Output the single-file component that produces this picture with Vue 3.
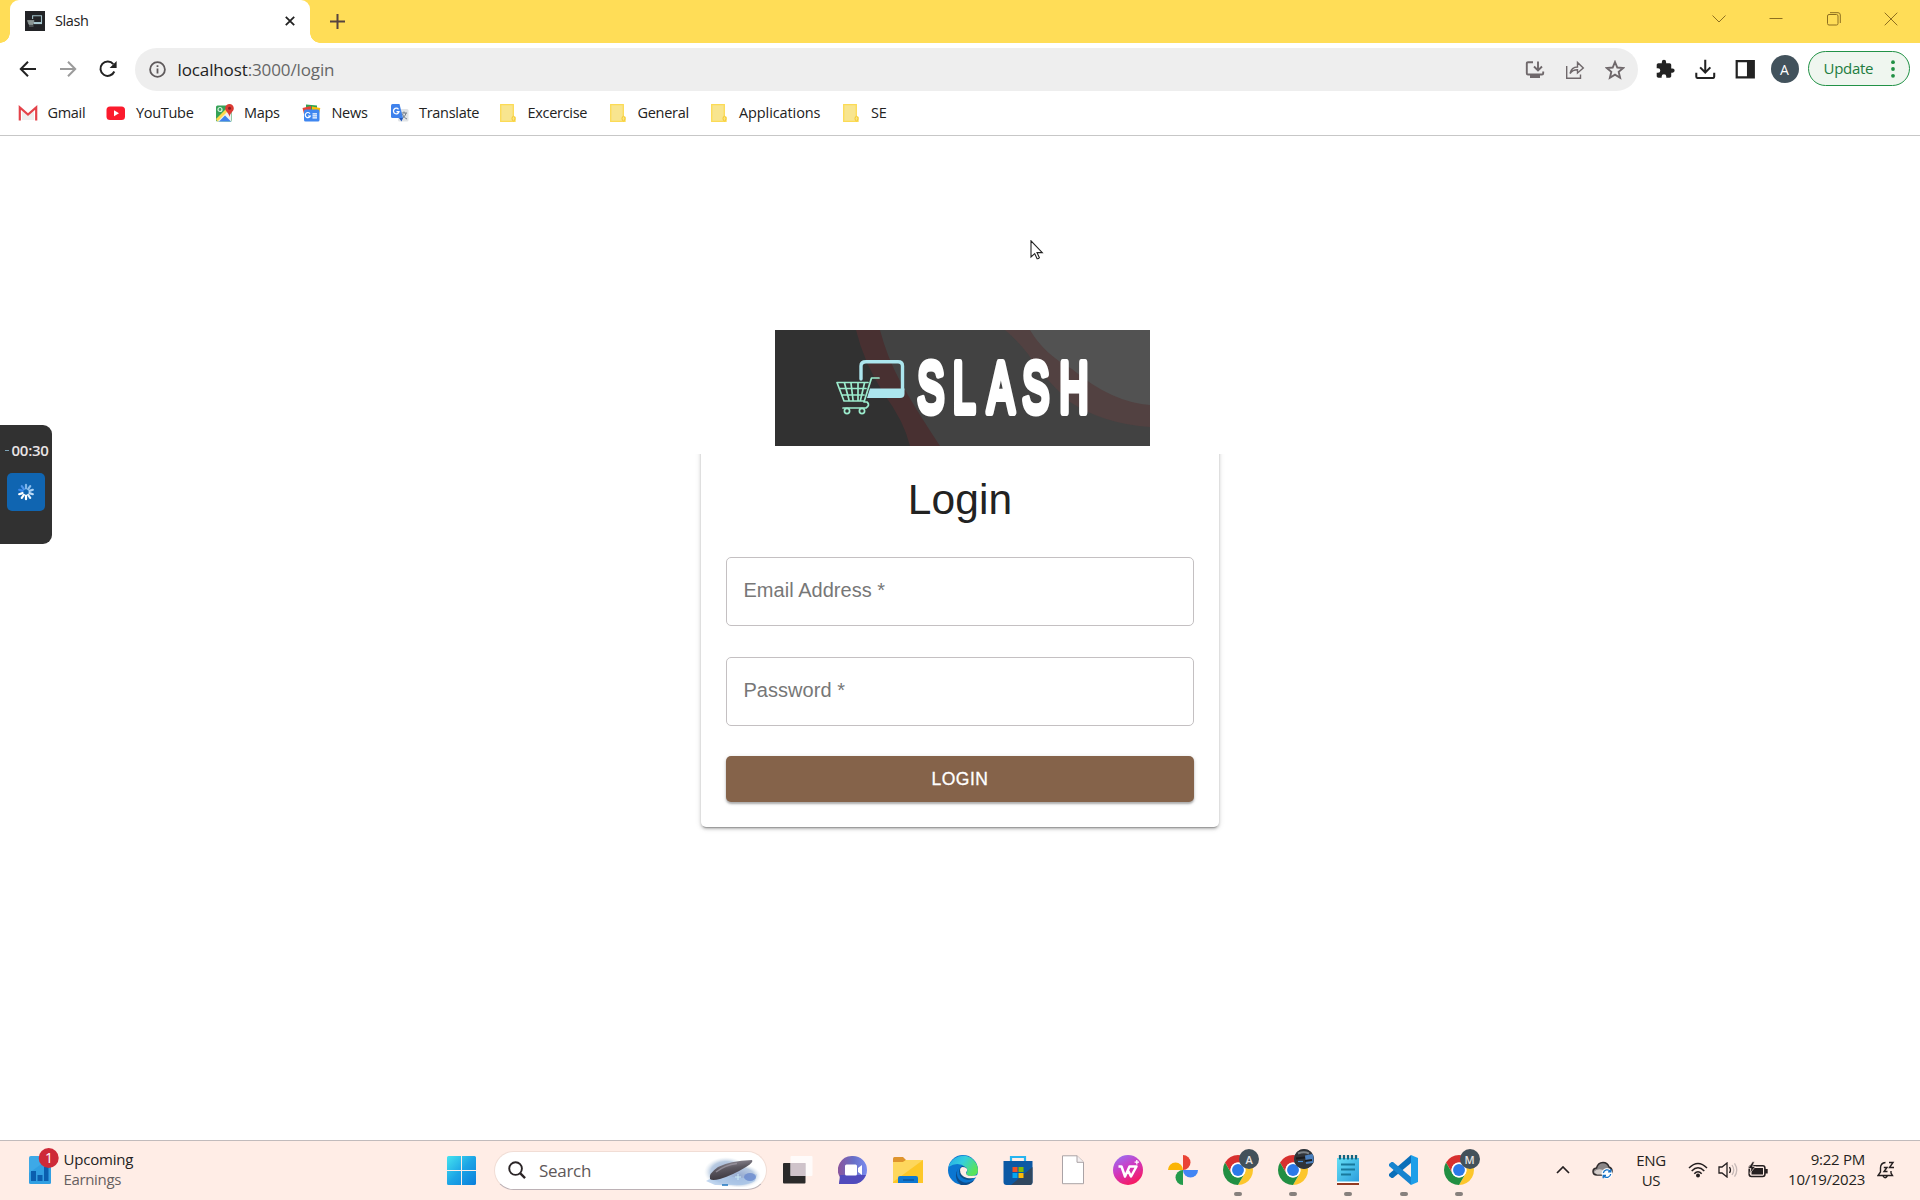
<script setup>
const bookmarks = [
  { label: 'Gmail', icon: 'gmail', width: 88, pad: 29.5 },
  { label: 'YouTube', icon: 'youtube', width: 109, pad: 30 },
  { label: 'Maps', icon: 'maps', width: 87, pad: 29 },
  { label: 'News', icon: 'news', width: 88, pad: 29.5 },
  { label: 'Translate', icon: 'translate', width: 110, pad: 29 },
  { label: 'Excercise', icon: 'folder', width: 110, pad: 27.5 },
  { label: 'General', icon: 'folder', width: 101, pad: 27.5 },
  { label: 'Applications', icon: 'folder', width: 132, pad: 28, spacing: -0.1 },
  { label: 'SE', icon: 'folder', width: 60, pad: 28 }
]
const apps = [
  { icon: 'taskview' },
  { icon: 'chat' },
  { icon: 'explorer' },
  { icon: 'edge' },
  { icon: 'store' },
  { icon: 'file' },
  { icon: 'wps' },
  { icon: 'photos' },
  { icon: 'chrome', badge: 'A', open: true },
  { icon: 'chrome', badge: 'photo', open: true },
  { icon: 'notepad', open: true },
  { icon: 'code', open: true },
  { icon: 'chrome', badge: 'M', open: true }
]
const rays = [0, 1, 2, 3, 4, 5, 6, 7, 8, 9]
const rayColors = ['#7fb6ea', '#8fc0ee', '#a9d0f4', '#bfdcf7', '#e6f2fc', '#ffffff', '#ffffff', '#ffffff', '#3d8bef', '#4f97ee']
</script>

<template>
  <div class="screen">
    <div class="titlebar">
      <div class="tab">
        <svg class="favicon" viewBox="0 0 20 20">
          <rect width="20" height="20" fill="#222326" />
          <path d="M7.600 8V4.800H16.500V11.500H8" fill="none" stroke="#9fbfc6" stroke-width="1.100" />
          <path d="M8.500 12.300H17" stroke="#a9c9d0" stroke-width="1.600" />
          <path d="M2.500 9.500H9L8 13.500H4ZM4 15H8.500" fill="#8b9694" stroke="#8b9694" stroke-width=".8" />
        </svg>
        <span class="tab-title">Slash</span>
        <svg class="tab-close" viewBox="0 0 10 10"><path d="M.8.8 9.200 9.200M9.200.8.8 9.200" stroke="#222" stroke-width="1.800" /></svg>
      </div>
      <svg class="new-tab" viewBox="0 0 15 15"><path d="M7.500 0V15M0 7.500H15" stroke="#57443f" stroke-width="2" /></svg>
      <div class="window-controls">
        <svg viewBox="0 0 14 14"><path d="M.5 3.500 7 10 13.500 3.500" /></svg>
        <svg viewBox="0 0 14 14"><path d="M.5 6.500H13.500" /></svg>
        <svg viewBox="0 0 14 14"><rect x=".5" y="2.500" width="10.500" height="10.500" rx="1.500" /><path d="M3 .7H11Q13.300.7 13.300 3V11" /></svg>
        <svg viewBox="0 0 14 14"><path d="M.7.7 13.300 13.300M13.300.7.7 13.300" /></svg>
      </div>
    </div>

    <div class="toolbar">
      <div class="nav">
        <svg viewBox="0 0 20 20" stroke="#222"><path d="M18 10H3M10 2.800 2.800 10 10 17.200" /></svg>
        <svg viewBox="0 0 20 20" stroke="#9b9b9b"><path d="M2 10H17M10 2.800 17.200 10 10 17.200" /></svg>
        <svg viewBox="0 0 20 20" stroke="#222"><path d="M16.300 12.500A7.200 7.200 0 1 1 15.300 5.200" /><path d="M18.600 2V9H11.600Z" fill="#222" stroke="none" /></svg>
      </div>
      <div class="omnibox">
        <svg class="info" viewBox="0 0 17 17"><circle cx="8.500" cy="8.500" r="7.400" fill="none" stroke="#5f5a5c" stroke-width="1.800" /><path d="M8.500 7.500V12.600M8.500 4.200V6" stroke="#5f5a5c" stroke-width="1.800" /></svg>
        <span class="url"><span class="host">localhost</span>:3000/login</span>
        <div class="omni-actions">
          <svg viewBox="0 0 20 20"><path d="M8 2.200H3Q1.800 2.200 1.800 3.400V13.200Q1.800 14.500 3 14.500H17Q18.200 14.500 18.200 13.200V11.500M13 1.500V9.500M9 6.500 13 10.500 17 6.500" /><path d="M5 15H15V18H5Z" fill="#6f686b" stroke="none" /></svg>
          <svg viewBox="0 0 20 20"><path d="M1.700 6V18.200H15.500V14.500M5 13.500C6 9 8.500 7 12.500 7V2.500L18.300 8 12.500 13V9.700C9 9.700 7 10.500 5 13.500Z" stroke-width="1.400" /></svg>
          <svg viewBox="0 0 20 20"><path d="M10 2 12.300 7.500 18.200 8 13.700 11.900 15.100 17.700 10 14.600 4.900 17.700 6.300 11.900 1.800 8 7.700 7.500Z" stroke-width="1.900" /></svg>
        </div>
      </div>
      <div class="extensions">
        <svg viewBox="0 0 24 24"><path d="M20.500 11H19V7c0-1.100-.9-2-2-2h-4V3.500a2.500 2.500 0 0 0-5 0V5H4c-1.100 0-2 .9-2 2v3.800h1.500a2.700 2.700 0 0 1 0 5.400H2V20c0 1.100.9 2 2 2h3.800v-1.500a2.700 2.700 0 0 1 5.400 0V22H17c1.100 0 2-.9 2-2v-4h1.500a2.500 2.500 0 0 0 0-5z" fill="#222" /></svg>
        <svg viewBox="0 0 24 24"><path d="M12 1V15.500M6 9.800 12 15.800 18 9.800M1.500 16V20.500Q1.500 22.300 3.500 22.300H20.500Q22.500 22.300 22.500 20.500V16" fill="none" stroke="#222" stroke-width="2.400" /></svg>
        <svg viewBox="0 0 24 24"><path d="M2 2.500H22V21.500H2Z" fill="#fff" stroke="#222" stroke-width="2.600" /><path d="M14 2H22V22H14Z" fill="#222" /></svg>
      </div>
      <div class="avatar">A</div>
      <div class="update"><span>Update</span><svg viewBox="0 0 4 18"><circle cx="2" cy="2.200" r="1.900" /><circle cx="2" cy="9" r="1.900" /><circle cx="2" cy="15.800" r="1.900" /></svg></div>
    </div>

    <div class="bookmarks">
      <div v-for="b in bookmarks" :key="b.label" class="bookmark" :style="{ width: b.width + 'px' }">
        <div class="bm-icon" :style="{ width: b.pad + 'px' }">
          <svg v-if="b.icon === 'gmail'" viewBox="0 0 20 20"><path d="M4 8V17H16V8L10 13Z" fill="#eee" /><path d="M1.800 17.500V4.500L10 11.500 18.200 4.500V17.500" fill="none" stroke="#e4434a" stroke-width="2.200" /></svg>
          <svg v-else-if="b.icon === 'youtube'" viewBox="0 0 20 20"><rect x=".5" y="3.500" width="18.500" height="13.500" rx="3.500" fill="#fb1b2d" /><path d="M8 7.300V13.200L13 10.200Z" fill="#fff" /></svg>
          <svg v-else-if="b.icon === 'maps'" viewBox="0 0 20 20"><rect x="1" y="2.500" width="16" height="16" rx="1.500" fill="#36a257" /><path d="M1.500 18.500 16.500 3.500V18Z" fill="#eef1f2" /><path d="M1 16 14 3 16 5 2.500 18.500Z" fill="#ffd94f" /><path d="M4 18.500 10 12.500 16 18.500Z" fill="#3f83ec" /><circle cx="5" cy="6.500" r="2" fill="none" stroke="#d8efe0" stroke-width="1.200" /><path d="M14.500 14C14 10 10.200 8.500 10.200 5.300A4.300 4.300 0 0 1 18.800 5.300C18.800 8.500 15 10 14.500 14Z" fill="#dc3a33" /><circle cx="14.500" cy="5.300" r="1.500" fill="#831f24" /></svg>
          <svg v-else-if="b.icon === 'news'" viewBox="0 0 20 20"><path d="M4 1.500 15 2.500V9H4Z" fill="#31a153" /><path d="M.5 5 9 3V12L2.500 13Z" fill="#e94335" /><path d="M18.300 5 10 3.500V12L16.500 13Z" fill="#fbbc04" /><rect x="2" y="6.500" width="15.500" height="12" rx="1.500" fill="#3f86f0" /><path d="M8 10.600A2.600 2.600 0 1 0 8.300 13H6M10.500 10.800H15M10.500 12.800H15M10.500 14.800H15" fill="none" stroke="#fff" stroke-width="1.200" /></svg>
          <svg v-else-if="b.icon === 'translate'" viewBox="0 0 20 20"><rect x="8" y="6" width="10.500" height="12.500" rx="1.500" fill="#e0e3e6" /><path d="M11.500 10H17M14 8.500V10M16 10C15.500 13 13 15 11.500 15.500M12.500 11C13.500 14 15 15 17 16" fill="none" stroke="#717b86" /><path d="M2.500 1H9.500L13 15H2.500Q1 15 1 13.500V2.500Q1 1 2.500 1Z" fill="#3f82ec" /><path d="M9 15H13L11.500 18.500Z" fill="#2156b9" /><path d="M8.500 6.300A2.800 2.800 0 1 0 9 8.700H6.500" fill="none" stroke="#fff" stroke-width="1.300" /></svg>
          <svg v-else viewBox="0 0 20 20"><path d="M.7 1.700H13.300V14.500H15V18.300H.7Z" fill="#f8e58f" stroke="#fcdb55" stroke-width="1.300" /><ellipse cx="13.500" cy="15.600" rx="1.500" ry="2.300" fill="#fbe47b" stroke="#f5c931" /></svg>
        </div>
        <span :style="b.spacing ? { letterSpacing: b.spacing + 'px' } : null">{{ b.label }}</span>
      </div>
    </div>

    <main class="page">
      <div class="banner-row">
        <svg class="banner" viewBox="0 0 375 116">
          <rect width="375" height="116" fill="#424242" />
          <path d="M0 0H82Q90 33 110 64Q130 91 136 116H0Z" fill="#313131" />
          <path d="M81 0H105Q112 27 125 51T165 116H135Q129 91 109 64Q89 33 81 0Z" fill="#483031" />
          <path d="M254 0H375V76Q336 73 296 40Q268 25 254 0Z" fill="#525252" />
          <path d="M230 0H255Q269 24 297 39Q336 72 375 75V97Q329 94 295 72Q266 45 253 24Q242 10 230 0Z" fill="#524141" />
          <g fill="none" stroke="#ace6ee" stroke-linecap="round">
            <path d="M86 49V36Q86 31.800 91 31.800H123Q127.500 31.800 127.500 36V60" stroke-width="3.400" />
            <path d="M95 58.500H129.500V64Q129.500 68 125 68H92Z" fill="#ace6ee" stroke="none" />
          </g>
          <g fill="none" stroke="#9ceccd" stroke-width="1.700" stroke-linecap="round" stroke-linejoin="round">
            <path d="M104 48H96.500L89 72H92Q95.500 75 91 78H68M93 52.500H62L69 71H89M64.500 58.500H91M67 65H89M69.500 53 74 70M76 53 78 70M83 53V70M89.500 53 85.500 70" />
            <circle cx="72" cy="81" r="2.600" /><circle cx="87" cy="81" r="2.600" />
          </g>
          <text class="logo-text" transform="translate(0 81.500) scale(1 1.780)" x="142.500 178 212.500 247.500 284.500" y="0">SLASH</text>
        </svg>
      </div>
      <div class="card">
        <h1>Login</h1>
        <div class="field">Email Address *</div>
        <div class="field">Password *</div>
        <button class="submit">LOGIN</button>
      </div>
    </main>

    <svg class="pointer" viewBox="0 0 14 22"><path d="M1 .8V17L4.700 13.600 7.100 18.700Q8.500 19 9.400 17.700L7 12.600H12.300Z" fill="#fff" stroke="#222" stroke-width="1.100" /></svg>

    <div class="recorder">
      <div class="timer"><i></i>00:30</div>
      <div class="rec-button">
        <svg viewBox="-9 -9 18 18"><path v-for="r in rays" :key="r" d="M0-3.600V-7.200" :transform="'rotate(' + r * 36 + ')'" :stroke="rayColors[r]" stroke-width="2.200" stroke-linecap="round" /></svg>
      </div>
    </div>

    <div class="taskbar">
      <div class="widget">
        <svg viewBox="0 0 34 36">
          <rect x="4" y="8" width="22" height="28" rx="1.800" fill="#3da9e7" /><path d="M4 25 26 9V34.500Q26 36 24.500 36H5.500Q4 36 4 34.500Z" fill="#2b99df" opacity=".65" />
          <path d="M6 23H11V33H6ZM12.500 27H17.500V33H12.500ZM19 19H23.500V33H19Z" fill="#0b5eae" />
          <circle cx="23.700" cy="10" r="10" fill="#ce2a38" />
          <text x="23.900" y="15" text-anchor="middle" class="count">1</text>
        </svg>
        <div class="widget-text"><span>Upcoming</span><span class="muted">Earnings</span></div>
      </div>
      <svg class="start" viewBox="0 0 29 29">
        <defs><linearGradient id="win" x2="1" y2="1"><stop offset="0" stop-color="#45e4ef" /><stop offset=".5" stop-color="#1da5e6" /><stop offset="1" stop-color="#0a7edb" /></linearGradient></defs>
        <path d="M1.500 0H14V14H0V1.500Q0 0 1.500 0ZM15 0H27.500Q29 0 29 1.500V14H15ZM0 15H14V29H1.500Q0 29 0 27.500ZM15 15H29V27.500Q29 29 27.500 29H15Z" fill="url(#win)" />
      </svg>
      <div class="search">
        <svg class="glass" viewBox="0 0 19 19"><circle cx="8" cy="8" r="6.700" fill="none" stroke="#2a2426" stroke-width="2" /><path d="M12.800 12.800 18 18" stroke="#2a2426" stroke-width="2.500" /></svg>
        <span>Search</span>
        <svg class="daily" viewBox="0 0 58 30">
          <defs>
            <radialGradient id="haze"><stop offset="0" stop-color="#93a8cf" /><stop offset=".7" stop-color="#b9cbe2" /><stop offset="1" stop-color="#e3ebf1" stop-opacity="0" /></radialGradient>
            <linearGradient id="rock" x1="0" x2=".3" y2="1"><stop offset="0" stop-color="#a19ca7" /><stop offset=".5" stop-color="#5d5962" /><stop offset="1" stop-color="#3b373f" /></linearGradient>
          </defs>
          <ellipse cx="23" cy="15" rx="22" ry="15" fill="url(#haze)" /><ellipse cx="36" cy="19" rx="22" ry="12" fill="url(#haze)" />
          <path d="M3 24Q15 17 30 20T54 17L52 24Q45 29 28 28H12Z" fill="#a6c4e8" opacity=".7" />
          <ellipse cx="47" cy="20" rx="6" ry="4" fill="#6685cc" opacity=".75" />
          <path d="M7 22Q5 17 15 10Q26 4 49 3Q51 5 43 10Q30 18 17 22Q9 24 7 22Z" fill="url(#rock)" />
          <path d="M13 15Q22 8 34 6.500" fill="none" stroke="#a39da8" stroke-width="1.500" opacity=".7" />
          <path d="M35 17V23M32 20H38" stroke="#d9fcff" opacity=".8" /><path d="M19 28H25" stroke="#2176bf" stroke-width="1.500" />
        </svg>
      </div>
      <div class="apps">
        <div v-for="(a, n) in apps" :key="n" class="app">
          <svg v-if="a.icon === 'taskview'" viewBox="0 0 30 30"><rect y="8" width="22.500" height="20.500" rx="1" fill="#2b2a2a" /><rect x="7.500" y="1" width="22" height="20" rx="1" fill="#fff" opacity=".78" /><path d="M7.500 8H22.500V21H7.500Z" fill="#cfc3ca" /></svg>
          <svg v-else-if="a.icon === 'chat'" viewBox="0 0 30 30"><defs><linearGradient id="chat" x1="0" x2="1"><stop offset="0" stop-color="#8a549d" /><stop offset=".55" stop-color="#6770c8" /><stop offset="1" stop-color="#7b8cf0" /></linearGradient></defs><path d="M15 1A14 14 0 1 1 15 29H1L2.500 23A14 14 0 0 1 15 1Z" fill="url(#chat)" /><path d="M2 20 28 20Q24 29 15 29H1Z" fill="#514bbc" /><rect x="7" y="9.500" width="12" height="11" rx="1.500" fill="#fff" /><path d="M20 13 24 10V20L20 17Z" fill="#fff" /></svg>
          <svg v-else-if="a.icon === 'explorer'" viewBox="0 0 30 30"><path d="M0 3.500Q0 2 1.500 2H10L13 5V12H0Z" fill="#df942d" /><path d="M0 7H10L13 5H30V28H0Z" fill="#fdc728" /><path d="M0 7H10L13 5H30L0 27Z" fill="#fed75d" /><path d="M5 28V23Q5 21 7 21H23Q25 21 25 23V28Z" fill="#0e78d2" /><path d="M10 25H21" stroke="#0c569d" stroke-width="1.500" /></svg>
          <svg v-else-if="a.icon === 'edge'" viewBox="0 0 30 30"><defs><linearGradient id="edge" x2="1" y2=".5"><stop offset="0" stop-color="#23a6e8" /><stop offset=".5" stop-color="#36cfdd" /><stop offset="1" stop-color="#58e35b" /></linearGradient></defs><circle cx="15" cy="15" r="15" fill="#0b76d1" /><path d="M.5 12A15 15 0 0 1 30 15Q30 21 23 21Q18 21 18 18.500Q20.500 16 18 12.500Q10 6 .5 12Z" fill="url(#edge)" /><path d="M11 12Q6 21 13 26Q18 30 26.500 25A15 15 0 0 1 13 30Q4 23 11 12Z" fill="#0d4c8b" /><path d="M14 11Q20 12 19 16Q17 18 19 20Q22 22 28 21Q25 25 20 25Q11 24 11 16Q11 13 14 11Z" fill="#0d5088" /><path d="M14 12Q20 12 19 16Q17 18 19 20Q22 22 30 20L29 22Q25 24 19 23Q12 21 12 15Q12 13 14 12Z" fill="#ffede6" /></svg>
          <svg v-else-if="a.icon === 'store'" viewBox="0 0 30 30"><path d="M8 7V2H22V7" fill="none" stroke="#27b5f0" stroke-width="2.200" /><path d="M.5 6H29.500V27Q29.500 30 26.500 30H3.500Q.5 30 .5 27Z" fill="#0c59a4" /><path d="M29.500 12V27Q29.500 30 26.500 30H8Z" fill="#30475f" /><path d="M9.500 12H14.500V17H9.500Z" fill="#f35325" /><path d="M15.500 12H20.500V17H15.500Z" fill="#81bc06" /><path d="M9.500 18H14.500V23H9.500Z" fill="#05a6f0" /><path d="M15.500 18H20.500V23H15.500Z" fill="#ffba08" /></svg>
          <svg v-else-if="a.icon === 'file'" viewBox="0 0 30 30"><path d="M4.500.8H19L25.500 7V28.700H4.500Z" fill="#fff" stroke="#aaa3a6" /><path d="M19 .8V7.300H25.500" fill="#f4eff0" stroke="#aaa3a6" /></svg>
          <svg v-else-if="a.icon === 'wps'" viewBox="0 0 30 30"><defs><linearGradient id="wps" x1=".2" x2=".7" y2="1"><stop offset="0" stop-color="#9a70f1" /><stop offset=".45" stop-color="#cf38c1" /><stop offset="1" stop-color="#fb1657" /></linearGradient></defs><circle cx="15" cy="15" r="15" fill="url(#wps)" /><path d="M5.500 11.500H8.500L12 21.500 16.500 11.500H23.500L18 21.500 14.800 15" fill="none" stroke="#fff" stroke-width="2.500" stroke-linejoin="round" /><path d="M23.800 5V9.400M21.600 7.200H26" stroke="#fff" stroke-width="1.300" /></svg>
          <svg v-else-if="a.icon === 'photos'" viewBox="0 0 30 30"><path d="M15 0A7.500 7.500 0 0 1 15 15Z" fill="#ea4335" /><path d="M30 15A7.500 7.500 0 0 1 15 15Z" fill="#4285f4" /><path d="M15 30A7.500 7.500 0 0 1 15 15Z" fill="#249b4b" /><path d="M0 15A7.500 7.500 0 0 1 15 15Z" fill="#fbb506" /></svg>
          <svg v-else-if="a.icon === 'chrome'" viewBox="2 2 44 44"><path d="M24 13H43.050A22 22 0 0 0 4.950 13L14.470 29.500A11 11 0 0 1 24 13Z" fill="#d8302f" /><path d="M43.050 13H24A11 11 0 0 1 33.530 29.500L24 46A22 22 0 0 0 43.050 13Z" fill="#fcc62c" /><path d="M4.950 13 14.470 29.500A11 11 0 0 0 33.530 29.500L24 46A22 22 0 0 1 4.950 13Z" fill="#218f42" /><circle cx="24" cy="24" r="11" fill="#fff" /><circle cx="24" cy="24" r="8.700" fill="#2b79e8" /></svg>
          <svg v-else-if="a.icon === 'notepad'" viewBox="0 0 30 30"><defs><linearGradient id="note" x2="1" y2="1"><stop offset="0" stop-color="#65dff4" /><stop offset="1" stop-color="#2b9ddd" /></linearGradient></defs><path d="M4 3H26V27H4Z" fill="url(#note)" /><path d="M4 26.500H26V28H4Z" fill="#fff" /><path d="M4 28H26V30H4Z" fill="#933a21" /><path d="M7 .5V3.500M11 .5V3.500M15 .5V3.500M19 .5V3.500M23 .5V3.500" stroke="#14647f" stroke-width="2.300" stroke-linecap="round" /><path d="M8 9.500H22M8 14.500H22M8 19.500H18" stroke="#18799c" stroke-width="1.800" /></svg>
          <svg v-else viewBox="0 0 30 30"><path d="M22 0 0 19V21L2.500 23H4L22 8Z" fill="#0b6fb9" /><path d="M22 30 0 11V9L2.500 7H4L22 22Z" fill="#1784cf" /><path d="M22 0 29 3V27L22 30Z" fill="#1e9fe9" /></svg>
          <div v-if="a.badge === 'photo'" class="badge"><svg viewBox="0 0 20 20"><circle cx="10" cy="10" r="10" fill="#303439" /><path d="M4 4.500Q10 2 15 4.500" fill="none" stroke="#7b8288" stroke-width="2" /><path d="M11 6.500 18.500 5Q20.500 9 19 14L12 15Z" fill="#4a7fbe" /><path d="M2 9.500 11 8.500M11 12 18 11" stroke="#1b1c1f" stroke-width="2" /><path d="M4 12.500H9" stroke="#4a90d8" stroke-width="1.200" /></svg></div>
          <div v-else-if="a.badge" class="badge">{{ a.badge }}</div>
          <i v-if="a.open" class="running"></i>
        </div>
      </div>
      <div class="tray">
        <svg class="t-up" viewBox="0 0 14 8"><path d="M1 7 7 1 13 7" fill="none" stroke="#251f20" stroke-width="1.700" /></svg>
        <svg class="t-cloud" viewBox="0 0 21 18"><path d="M5 14Q1 14 1 10.500Q1 7.500 4.500 7Q6 1.500 11 1.500Q15.500 1.500 17 6Q20 7 20 10Q20 14 16 14Z" fill="#8b8687" stroke="#302b2c" stroke-width="1.500" /><path d="M2 11Q5 7 11 9L19 8Q20 14 16 13.500H5Z" fill="#d4cdca" /><circle cx="15" cy="12.500" r="5.400" fill="#fff" /><path d="M11.300 12A4 4 0 0 1 18.300 10.300M18.700 13A4 4 0 0 1 11.700 15M18.800 8V10.800H16M11.200 17.200V14.500H14" fill="none" stroke="#1672c7" stroke-width="1.300" /></svg>
        <div class="lang"><span>ENG</span><span>US</span></div>
        <svg class="t-wifi" viewBox="0 0 20 16"><path d="M1 6Q10-3 19 6M3.700 9Q10 2.500 16.300 9M6.300 11.800Q10 7.800 13.700 11.800" fill="none" stroke="#251f20" stroke-width="1.500" /><circle cx="10" cy="13.500" r="2" fill="#251f20" /></svg>
        <svg class="t-sound" viewBox="0 0 20 16"><path d="M1 5H4L9 1V15L4 11H1Z" fill="none" stroke="#251f20" stroke-width="1.300" /><path d="M11.500 5Q13.500 8 11.500 11" fill="none" stroke="#251f20" stroke-width="1.300" /><path d="M14 3Q17.500 8 14 13M16.500 1.300Q21 8 16.500 14.700" fill="none" stroke="#c6b9b7" stroke-width="1.300" /></svg>
        <svg class="t-battery" viewBox="0 0 20 16"><rect x="1.200" y="3.800" width="15.700" height="10.700" rx="2.200" fill="none" stroke="#251f20" stroke-width="1.600" /><path d="M6 6H15V12.500H3.500V9ZM17 7H19.700V11.500H17Z" fill="#251f20" /><path d="M4.500-.3 0 6.500H3L1.800 11.500 7.500 4.500H4.500L6.500-.3Z" fill="#251f20" stroke="#ffede6" stroke-width=".6" /></svg>
        <div class="clock"><span>9:22 PM</span><span>10/19/2023</span></div>
        <svg class="t-bell" viewBox="0 0 18 18"><path d="M8.500 1.500Q3.500 2 3.500 7V11L1 14.500H15.500L14 12V10M6 15Q8 18.500 10.300 15" fill="none" stroke="#251f20" stroke-width="1.400" /><path d="M6.800 6.500H10L7 10.500H10.500M12 1.500H16L12.500 6.500H17" fill="none" stroke="#251f20" stroke-width="1.400" /></svg>
      </div>
    </div>
  </div>
</template>

<style>
body { margin: 0; overflow: hidden; background: #fff; }
</style>

<style scoped>
.screen { position: relative; display: flex; flex-direction: column; width: 1920px; height: 1200px; overflow: hidden; background: #fff; font-family: "Open Sans", "Noto Sans", sans-serif; color: #222; }
svg { display: block; flex: none; }
.titlebar { display: flex; align-items: flex-start; height: 43px; padding-left: 10px; background: #ffdd57; flex: none; box-sizing: border-box; }
.tab { position: relative; display: flex; align-items: center; width: 300px; height: 43px; box-sizing: border-box; padding: 0 15px; border-radius: 9px 9px 0 0; background: #fff; }
.tab::before, .tab::after { content: ""; position: absolute; bottom: 0; width: 10px; height: 10px; }
.tab::before { left: -10px; background: radial-gradient(circle at 0 0, transparent 9.500px, #fff 10px); }
.tab::after { right: -10px; background: radial-gradient(circle at 100% 0, transparent 9.500px, #fff 10px); }
.favicon { width: 20px; height: 20px; margin-bottom: 1px; }
.tab-title { flex: 1; margin-left: 10px; font-size: 14.500px; letter-spacing: -.4px; line-height: 20px; padding-bottom: 1px; }
.tab-close { width: 10px; height: 10px; margin-bottom: 1px; }
.new-tab { width: 15px; height: 15px; margin: 14px 0 0 20px; }
.window-controls { display: flex; gap: 43.300px; margin: 12px 22px 0 auto; }
.window-controls svg { width: 14px; height: 14px; fill: none; stroke: #8e6f20; stroke-width: 1; }

.toolbar { display: flex; align-items: center; height: 53px; flex: none; }
.nav { display: flex; gap: 20px; width: 117.500px; padding-left: 17.500px; }
.nav svg { width: 20px; height: 20px; fill: none; stroke-width: 2; margin-bottom: 2px; }
.omnibox { display: flex; align-items: center; width: 1503px; height: 43px; border-radius: 22px; background: #eee; box-sizing: border-box; padding: 0 13px 0 14px; }
.info { width: 17px; height: 17px; }
.url { margin-left: 11.500px; font-size: 17px; letter-spacing: -.12px; line-height: 24px; color: #666; white-space: nowrap; }
.host { color: #222; }
.omni-actions { display: flex; gap: 20px; margin-left: auto; }
.omni-actions svg { width: 20px; height: 20px; fill: none; stroke: #6f686b; stroke-width: 1.900; }
.extensions { display: flex; gap: 19.500px; margin-left: 17px; margin-bottom: 1px; align-items: center; }
.extensions svg { width: 20.500px; height: 20.500px; }
.avatar { display: flex; align-items: center; justify-content: center; width: 28px; height: 28px; margin-left: 15px; margin-bottom: 1px; border-radius: 50%; background: #42525c; color: #fff; font: 14px "Open Sans", sans-serif; }
.update { display: flex; align-items: center; justify-content: space-between; width: 102px; height: 35px; margin: 0 0 2px 9px; padding: 0 14px 0 15px; box-sizing: border-box; border: 1.500px solid #229247; border-radius: 18px; background: #eff6ef; color: #227c3e; font-size: 15px; letter-spacing: -.3px; }
.update span { padding-bottom: 1px; }
.update svg { width: 4px; height: 18px; fill: #209044; }

.bookmarks { display: flex; align-items: center; height: 40px; flex: none; box-sizing: border-box; padding: 0 0 6px 18px; border-bottom: 1px solid #c7c7c7; }
.bookmark { display: flex; align-items: center; font-size: 14.500px; letter-spacing: -.3px; line-height: 20px; white-space: nowrap; }
.bm-icon { flex: none; }
.bm-icon svg { width: 20px; height: 20px; }

.page { flex: 1; display: flex; flex-direction: column; align-items: center; padding-top: 194px; }
.banner-row { position: relative; z-index: 1; width: 540px; padding-bottom: 8px; background: #fff; }
.banner { width: 375px; height: 116px; margin-left: 85px; }
.logo-text { font-family: "Liberation Sans", Arial, sans-serif; font-size: 40px; fill: #fff; stroke: #fff; stroke-width: 6.500px; stroke-linejoin: round; vector-effect: non-scaling-stroke; }
.card { display: flex; flex-direction: column; width: 518px; height: 381px; margin-top: -8px; box-sizing: border-box; padding: 28px 25px 0; border-radius: 5px; background: #fff; box-shadow: 0 3px 1px -2px rgba(0,0,0,.2), 0 2px 3px rgba(0,0,0,.22), 0 1px 6px rgba(0,0,0,.13); font-family: "Liberation Sans", Arial, sans-serif; }
h1 { margin: 0 0 31px; height: 52px; line-height: 52px; text-align: center; font-size: 42.500px; font-weight: 400; letter-spacing: .1px; color: #222; }
.field { height: 69px; box-sizing: border-box; margin-bottom: 31px; padding-left: 16.500px; border: 1px solid #c4c0c2; border-radius: 5px; font-size: 20px; letter-spacing: .03px; line-height: 64px; color: #777; }
.submit { height: 46px; margin-top: -1px; padding: 0; border: 0; border-radius: 5px; background: #85634a; color: #fff; font: 17.500px/46px "Liberation Sans", Arial, sans-serif; letter-spacing: .5px; -webkit-text-stroke: .3px #fff; box-shadow: 0 2px 2px rgba(0,0,0,.25), 0 1px 4px rgba(0,0,0,.15); }

.pointer { position: absolute; left: 1029.500px; top: 239.500px; width: 14px; height: 22px; }
.recorder { position: absolute; left: 0; top: 425px; width: 52px; height: 119px; border-radius: 0 9px 9px 0; background: #313131; }
.timer { display: flex; align-items: center; height: 20px; margin: 15px 0 13px 5px; color: #e9e4e5; font-size: 15px; font-weight: 600; letter-spacing: -.25px; }
.timer i { width: 4px; height: 1px; margin-right: 2.500px; background: #7ea4b8; }
.rec-button { display: flex; align-items: center; justify-content: center; width: 38px; height: 38px; margin-left: 7px; border-radius: 5px; background: #1065b1; }
.rec-button svg { width: 18px; height: 18px; }

.taskbar { display: flex; align-items: center; height: 60px; flex: none; box-sizing: border-box; border-top: 1px solid #c1bbbc; background: #ffede6; padding-left: 25px; }
.widget { display: flex; align-items: center; width: 422px; }
.widget > svg { width: 34px; height: 36px; margin-bottom: 9px; }
.widget-text { display: flex; flex-direction: column; margin: 0 0 4px 4.500px; font-size: 15px; line-height: 20px; letter-spacing: -.2px; }
.count { font: 14px "Open Sans", sans-serif; fill: #fff; }
.muted { color: #665f60; letter-spacing: -.35px; }
.start { width: 29px; height: 29px; margin-bottom: 1px; }
.search { display: flex; align-items: center; width: 273px; height: 39px; margin: 0 0 1px 18px; box-sizing: border-box; padding: 0 5px 0 13px; border: 1px solid #f1ddd5; border-bottom-color: #bcb1b5; border-radius: 20px; background: #fff; color: #5e5859; font-size: 17px; letter-spacing: -.3px; }
.glass { width: 18px; height: 18px; margin-right: 13px; }
.daily { width: 58px; height: 30px; margin: 4px 0 0 auto; }
.apps { display: flex; margin-left: 3px; }
.app { position: relative; display: flex; align-items: center; justify-content: center; width: 55.100px; height: 58px; }
.app > svg { width: 30px; height: 30px; margin-bottom: 1px; }
.badge { position: absolute; left: 28.500px; top: 7.500px; display: flex; align-items: center; justify-content: center; width: 20px; height: 20px; border-radius: 50%; background: #43515a; color: #e5e2e2; font: 600 11px "Open Sans", sans-serif; }
.badge svg { width: 20px; height: 20px; }
.running { position: absolute; bottom: 4px; width: 8px; height: 4px; border-radius: 2px; background: #87807d; }
.tray { display: flex; align-items: center; margin-left: auto; padding-right: 25px; color: #251f20; }
.tray svg { margin-bottom: 2px; }
.t-up { width: 14px; height: 8px; margin-right: 22px; }
.t-cloud { width: 21px; height: 18px; margin-right: 23px; }
.lang, .clock { display: flex; flex-direction: column; font-size: 15px; line-height: 20px; letter-spacing: -.4px; }
.lang { width: 30px; align-items: center; margin: 0 22px 2px 0; }
.t-wifi { width: 20px; height: 16px; margin-right: 10px; }
.t-sound { width: 20px; height: 16px; margin-right: 10px; }
.t-battery { width: 20px; height: 16px; overflow: visible; }
.clock { width: 97px; align-items: flex-end; margin: 0 12px 4px 0; letter-spacing: -.27px; }
.t-bell { width: 18px; height: 18px; }
</style>
